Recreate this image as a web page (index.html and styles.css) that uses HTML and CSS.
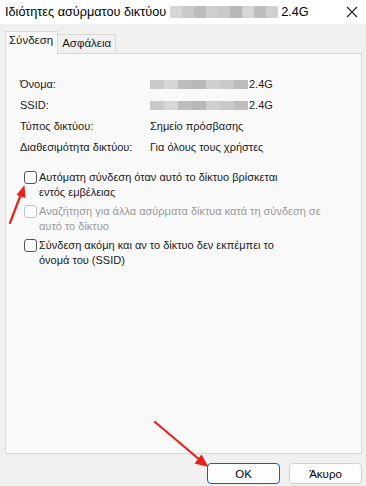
FILE: index.html
```html
<!DOCTYPE html>
<html lang="el">
<head>
  <meta charset="UTF-8" />
  <title>Ιδιότητες ασύρματου δικτύου</title>
  <link rel="stylesheet" href="styles.css">
</head>
<body>

  <div class="window">
    <div class="titlebar">
      <span class="title">Ιδιότητες ασύρματου δικτύου</span>
      <span class="blur wide">
        <i class="b1"></i><i class="b2"></i><i class="b3"></i><i class="b4"></i><i class="b2"></i><i class="b5"></i><i class="b1"></i><i class="b3"></i><i class="b4"></i>
      </span>
      <span class="title">2.4G</span>
      <svg class="close" width="12" height="12" viewBox="0 0 12 12">
        <path d="M1 1 L11 11 M11 1 L1 11" stroke="#222" stroke-width="1.1" fill="none" />
      </svg>
    </div>

    <div class="content">
      <div class="tabs">
        <div class="tab active">Σύνδεση</div>
        <div class="tab">Ασφάλεια</div>
      </div>

      <div class="panel">
        <div class="info">
          <div class="info-row">
            <span class="label">Όνομα:</span>
            <span class="value">
              <span class="blur"><i class="b2"></i><i class="b1"></i><i class="b3"></i><i class="b5"></i><i class="b4"></i><i class="b2"></i><i class="b3"></i></span>2.4G
            </span>
          </div>
          <div class="info-row">
            <span class="label">SSID:</span>
            <span class="value">
              <span class="blur"><i class="b2"></i><i class="b1"></i><i class="b3"></i><i class="b5"></i><i class="b4"></i><i class="b2"></i><i class="b3"></i></span>2.4G
            </span>
          </div>
          <div class="info-row">
            <span class="label">Τύπος δικτύου:</span>
            <span class="value">Σημείο πρόσβασης</span>
          </div>
          <div class="info-row last">
            <span class="label">Διαθεσιμότητα δικτύου:</span>
            <span class="value">Για όλους τους χρήστες</span>
          </div>
        </div>

        <div class="checks">
          <label class="check">
            <span class="box"></span>
            <span>Αυτόματη σύνδεση όταν αυτό το δίκτυο βρίσκεται<br>εντός εμβέλειας</span>
          </label>
          <label class="check disabled">
            <span class="box"></span>
            <span>Αναζήτηση για άλλα ασύρματα δίκτυα κατά τη σύνδεση σε<br>αυτό το δίκτυο</span>
          </label>
          <label class="check">
            <span class="box"></span>
            <span>Σύνδεση ακόμη και αν το δίκτυο δεν εκπέμπει το<br>όνομά του (SSID)</span>
          </label>
        </div>
      </div>

      <div class="buttons">
        <button class="btn primary">OK</button>
        <button class="btn">Άκυρο</button>
      </div>
    </div>

    <!-- red annotation arrows drawn over the dialog -->
    <svg class="arrows" width="366" height="486" viewBox="0 0 366 486">
      <g stroke="#e8211b" stroke-width="2.2" stroke-linecap="round" fill="#e8211b">
        <line x1="10" y1="223" x2="21" y2="194" />
        <polygon points="24.5,185 16.5,195 25.5,198" stroke="none" />
        <line x1="155" y1="422" x2="200" y2="460" />
        <polygon points="208.5,467 194.5,463.5 201.5,454.5" stroke="none" />
      </g>
    </svg>
  </div>

</body>
</html>
```

FILE: styles.css
```css
body {
  margin: 0;
  font-family: "Liberation Sans", Arial, sans-serif;
  font-size: 11px;
  color: #1a1a1a;
}

.window {
  position: relative;
  width: 366px;
  height: 486px;
  background-color: #f0f0f0;
  overflow: hidden;
}

.titlebar {
  height: 24px;
  background-color: #fff;
  display: flex;
  align-items: center;
  padding-left: 5px;
  font-size: 12.7px;
  color: #000;
}

.titlebar .close {
  margin-left: auto;
  margin-right: 8px;
}

.blur {
  display: inline-flex;
  height: 9px;
  width: 98px;
  margin-right: 1px;
  vertical-align: -1px;
}

.blur.wide {
  width: 108px;
  height: 12px;
  margin: 0 3px 0 4px;
}

.blur i {
  flex: 1;
}

.b1 { background-color: #d6d6d6; }
.b2 { background-color: #c9c9c9; }
.b3 { background-color: #bdbdbd; }
.b4 { background-color: #cfcfcf; }
.b5 { background-color: #b8b8b8; }

.content {
  padding: 8px 4px 0 5px;
}

.tabs {
  display: flex;
  align-items: flex-end;
  height: 21px;
}

.tab {
  border: 1px solid #d9d9d9;
  border-bottom: none;
  padding: 2px 4px 0 4px;
  height: 16px;
  background-color: #f0f0f0;
  margin-left: -1px;
  font-size: 11.5px;
}

.tab.active {
  background-color: #f9f9f9;
  height: 20px;
  padding: 2px 4px 0 3px;
  margin-left: 0;
  margin-bottom: -1px;
  position: relative;
  z-index: 1;
}

.panel {
  background-color: #f9f9f9;
  border: 1px solid #d9d9d9;
  height: 399px;
  padding: 0 14px;
}

.info {
  padding-top: 20px;
}

.info-row {
  display: flex;
  height: 20px;
  line-height: 20px;
  margin-bottom: 1px;
}

.info-row.last {
  margin-top: 1px;
}

.label {
  width: 130px;
}

.checks {
  margin-top: 13px;
}

.check {
  display: flex;
  align-items: flex-start;
  line-height: 15px;
  margin-bottom: 4px;
  margin-left: 4px;
}

.check .box {
  width: 11px;
  height: 11px;
  border: 1px solid #555;
  border-radius: 3px;
  background-color: #fdfdfd;
  margin: 1px 2px 0 0;
  flex-shrink: 0;
}

.check.disabled {
  color: #9a9a9a;
}

.check.disabled .box {
  border-color: #c2c2c2;
}

.buttons {
  display: flex;
  justify-content: flex-end;
  gap: 9px;
  margin-top: 9px;
}

.btn {
  width: 73px;
  height: 21px;
  font-family: "Liberation Sans", Arial, sans-serif;
  font-size: 11.5px;
  color: #000;
  background-color: #fdfdfd;
  border: 1px solid #d0d0d0;
  border-radius: 4px;
  padding: 0;
}

.btn.primary {
  border-color: #0067c0;
}

.arrows {
  position: absolute;
  left: 0;
  top: 0;
  pointer-events: none;
}
```
